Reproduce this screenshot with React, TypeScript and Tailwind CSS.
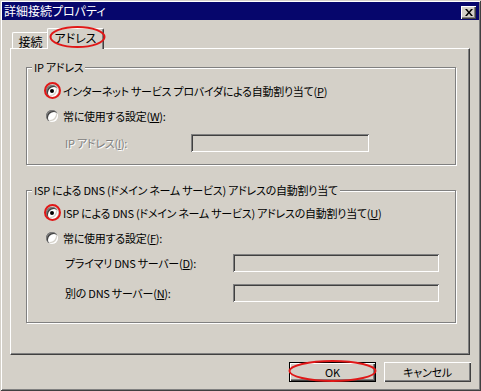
import React from "react";

const raised =
  "bg-[#d4d0c8] shadow-[inset_1px_1px_0_#fff,inset_-1px_-1px_0_#404040,inset_-2px_-2px_0_#808080]";
const sunken =
  "bg-[#d4d0c8] shadow-[inset_1px_1px_0_#808080,inset_-1px_-1px_0_#fff,inset_2px_2px_0_#404040,inset_-2px_-2px_0_#d4d0c8]";

function Radio({ checked }: { checked?: boolean }) {
  return (
    <div className="w-[12px] h-[12px] rounded-full bg-white shrink-0 flex items-center justify-center shadow-[inset_1px_1px_0_#808080,inset_2px_2px_0_#404040,inset_-1px_-1px_0_#fff,inset_-2px_-2px_0_#d4d0c8]">
      {checked && <div className="w-[4px] h-[4px] rounded-full bg-black" />}
    </div>
  );
}

function Mn({ k }: { k: string }) {
  return (
    <>
      (<span className="underline underline-offset-[1px]">{k}</span>)
    </>
  );
}

function RadioRow({ checked, children, mt }: { checked?: boolean; children: React.ReactNode; mt: string }) {
  return (
    <div className={`flex items-center h-[16px] pl-[19px] ${mt}`}>
      <Radio checked={checked} />
      <span className="ml-[5px] leading-[16px] whitespace-nowrap">{children}</span>
    </div>
  );
}

function Legend({ children }: { children: React.ReactNode }) {
  return (
    <div className="-mt-[8px] ml-[5px] px-[2px] w-fit h-[14px] leading-[14px] bg-[#d4d0c8] whitespace-nowrap">
      {children}
    </div>
  );
}

export default function App() {
  return (
    <div className="relative w-[481px] h-[391px] bg-[#d4d0c8] p-[2px] flex flex-col text-[11px] tracking-[-0.25px] text-black font-['Noto_Sans_CJK_JP','Noto_Sans',sans-serif] [font-feature-settings:'palt'] shadow-[inset_1px_1px_0_#d4d0c8,inset_-1px_-1px_0_#404040,inset_2px_2px_0_#fff,inset_-2px_-2px_0_#808080]">
      {/* title bar */}
      <div className="h-[18px] bg-[#06066c] flex items-center justify-between pl-[2px] pr-[3px]">
        <span className="text-white text-[12px] tracking-normal leading-[18px] whitespace-nowrap">詳細接続プロパティ</span>
        <div className={`w-[15px] h-[13px] mt-[2px] flex items-center justify-center ${raised}`}>
          <svg width="8" height="7" viewBox="0 0 8 7">
            <path d="M0 0h2l2 2.5L6 0h2L5 3.5 8 7H6L4 4.5 2 7H0l3-3.5z" fill="#000" />
          </svg>
        </div>
      </div>

      {/* tabs + panel */}
      <div className="pl-[8px] pr-[9px]">
        <div className="flex items-end mt-[8px] h-[20px] relative z-10 text-[12px] tracking-normal">
          <div className="ml-[2px] w-[37px] h-[16px] border-t border-l border-white border-r border-r-[#404040] rounded-t-[2px] shadow-[inset_-1px_0_0_#808080] bg-[#d4d0c8] flex items-center justify-center pt-[2px] leading-[14px]">
            接続
          </div>
          <div className="-ml-[2px] -mb-[1px] w-[57px] h-[21px] border-t border-l border-white border-r border-r-[#404040] rounded-t-[2px] shadow-[inset_-1px_0_0_#808080] bg-[#d4d0c8] flex items-start justify-center pt-[2px] leading-[14px]">
            アドレス
          </div>
        </div>
        <div className="h-[307px] border-t border-l border-white border-r border-b border-r-[#404040] border-b-[#404040] shadow-[inset_-1px_-1px_0_#808080] pl-[15px]">
          {/* group 1 */}
          <div className="mt-[18px] w-[430px] h-[98px] border border-[#808080] shadow-[inset_1px_1px_0_#fff,1px_1px_0_#fff]">
            <Legend>IP アドレス</Legend>
            <RadioRow checked mt="mt-[9px]">
              インターネット サービス プロバイダによる自動割り当て<Mn k="P" />
            </RadioRow>
            <RadioRow mt="mt-[9px]">
              常に使用する設定<Mn k="W" />:
            </RadioRow>
            <div className="mt-[10px] flex items-center pl-[38px]">
              <span className="w-[126px] text-[#808080] [text-shadow:1px_1px_0_#fff] whitespace-nowrap">
                IP アドレス<Mn k="I" />:
              </span>
              <div className={`w-[178px] h-[18px] ${sunken}`} />
            </div>
          </div>

          {/* group 2 */}
          <div className="mt-[25px] w-[430px] h-[133px] border border-[#808080] shadow-[inset_1px_1px_0_#fff,1px_1px_0_#fff]">
            <Legend>ISP による DNS (ドメイン ネーム サービス) アドレスの自動割り当て</Legend>
            <RadioRow checked mt="mt-[8px]">
              ISP による DNS (ドメイン ネーム サービス) アドレスの自動割り当て<Mn k="U" />
            </RadioRow>
            <RadioRow mt="mt-[9px]">
              常に使用する設定<Mn k="F" />:
            </RadioRow>
            <div className="mt-[8px] flex items-center pl-[38px]">
              <span className="w-[168px] whitespace-nowrap">
                プライマリ DNS サーバー<Mn k="D" />:
              </span>
              <div className={`w-[206px] h-[18px] ${sunken}`} />
            </div>
            <div className="mt-[12px] flex items-center pl-[38px]">
              <span className="w-[168px] whitespace-nowrap">
                別の DNS サーバー<Mn k="N" />:
              </span>
              <div className={`w-[206px] h-[18px] ${sunken}`} />
            </div>
          </div>
        </div>

        {/* buttons */}
        <div className="mt-[7px] flex justify-end gap-[8px] -mr-[1px]">
          <div className="w-[87px] h-[20px] border border-black">
            <div className={`w-full h-full flex items-center justify-center ${raised}`}>OK</div>
          </div>
          <div className={`w-[87px] h-[20px] flex items-center justify-center ${raised}`}>キャンセル</div>
        </div>
      </div>

      {/* red annotation marks */}
      <svg className="absolute left-0 top-0 z-20 pointer-events-none" width="481" height="391">
        <g fill="none" stroke="#e01818" strokeWidth="2">
          <ellipse cx="77.5" cy="37" rx="27" ry="10" />
          <circle cx="52.5" cy="90.5" r="7.5" />
          <circle cx="52.5" cy="212.5" r="7.5" />
          <ellipse cx="332.5" cy="371" rx="43" ry="10" />
        </g>
      </svg>
    </div>
  );
}
